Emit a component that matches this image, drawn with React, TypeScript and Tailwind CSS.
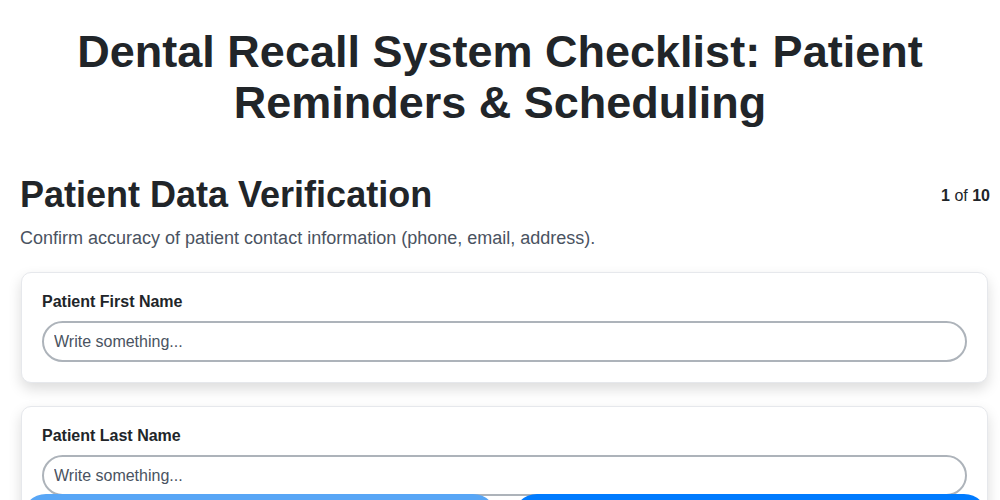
import { useState } from 'react';

const fields = ['Patient First Name', 'Patient Last Name'];

function FieldCard({ label }: { label: string }) {
  const [value, setValue] = useState('');
  return (
    <div className="rounded-[10px] border border-[#e6e8ec] bg-white px-[20px] pb-[20px] pt-[19px] shadow-[0_6px_14px_rgba(0,0,0,0.14)]">
      <label className="mb-[9px] block text-[16px] font-bold leading-[20px] text-[#212529]">{label}</label>
      <input
        value={value}
        onChange={(e) => setValue(e.target.value)}
        placeholder="Write something..."
        className="h-[41px] w-full rounded-full border-2 border-[#adb3ba] bg-white px-[10px] text-[16px] text-[#212529] outline-none placeholder:text-[#4a5361]"
      />
    </div>
  );
}

export default function App() {
  return (
    <div className="min-h-screen bg-white font-['Liberation_Sans',Arial,sans-serif] text-[#212529]">
      <h1 className="px-[20px] pt-[26px] text-center text-[45px] font-bold leading-[51px] text-[#212529]">
        Dental Recall System Checklist: Patient Reminders &amp; Scheduling
      </h1>

      <div className="pl-[20px] pr-[10px]">
        <div className="mt-[46px] flex items-start justify-between">
          <h2 className="text-[36px] font-bold leading-[42px]">Patient Data Verification</h2>
          <div className="pt-[12px] text-[16px] leading-[20px]">
            <span className="font-bold">1</span> of <span className="font-bold">10</span>
          </div>
        </div>
        <p className="mt-[10px] text-[18px] leading-[24px] text-[#4a5361]">
          Confirm accuracy of patient contact information (phone, email, address).
        </p>

        <div className="mt-[22px] flex flex-col gap-[23px] pb-[80px] pl-[1px] pr-[2px]">
          {fields.map((f) => (
            <FieldCard key={f} label={f} />
          ))}
        </div>
      </div>

      <div className="fixed inset-x-0 top-[494px] flex gap-[16px] pl-[22px] pr-[12px]">
        <button type="button" className="h-[48px] flex-1 rounded-full bg-[#58a6f6] pt-[20px] text-[16px] font-bold text-white">
          Previous
        </button>
        <button type="button" className="h-[48px] flex-1 rounded-full bg-[#007bff] pt-[20px] text-[16px] font-bold text-white">
          Next
        </button>
      </div>
    </div>
  );
}
